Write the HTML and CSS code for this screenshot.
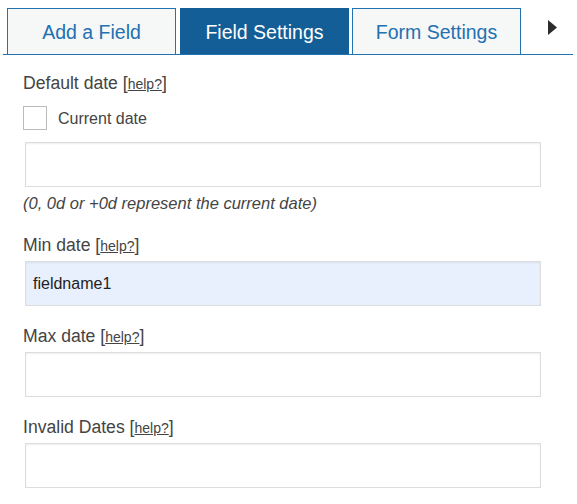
FILE: index.html
```html
<!DOCTYPE html>
<html>
<head>
<meta charset="utf-8">
<link rel="stylesheet" href="styles.css">
</head>
<body>
<div class="tabs">
  <div class="tab">Add a Field</div>
  <div class="tab active">Field Settings</div>
  <div class="tab third">Form Settings</div>
  <div class="more"><svg width="10" height="15" viewBox="0 0 10 15"><polygon points="0,0 9,7.5 0,15" fill="#2c2c2c"/></svg></div>
</div>
<div class="content">
  <div class="label">Default date [<a class="help">help?</a>]</div>
  <div class="check-row"><span class="checkbox"></span><span class="check-label">Current date</span></div>
  <div class="input first"></div>
  <div class="hint">(0, 0d or +0d represent the current date)</div>

  <div class="label gap-first">Min date [<a class="help">help?</a>]</div>
  <div class="input filled">fieldname1</div>

  <div class="label gap">Max date [<a class="help">help?</a>]</div>
  <div class="input"></div>

  <div class="label gap">Invalid Dates [<a class="help">help?</a>]</div>
  <div class="input"></div>
</div>
</body>
</html>
```
FILE: styles.css
```css
html, body {
  margin: 0;
  padding: 0;
  background: #fff;
  font-family: "Liberation Sans", Arial, sans-serif;
}
.tabs {
  display: flex;
  align-items: flex-end;
  margin: 8px 4px 0 3px;
  padding-left: 4px;
  border-bottom: 1px solid #2271b1;
  height: 46px;
}
.tab {
  box-sizing: border-box;
  width: 169px;
  height: 46px;
  border: 1px solid #2271b1;
  border-bottom: none;
  background: #f6f7f7;
  color: #2271b1;
  font-size: 19.5px;
  display: flex;
  align-items: center;
  justify-content: center;
  padding-top: 2px;
  margin-right: 4px;
}
.tab.active {
  background: #135e96;
  border-color: #135e96;
  color: #fff;
  margin-right: 3px;
}
.more {
  flex: 1;
  align-self: stretch;
  display: flex;
  align-items: center;
  justify-content: center;
  padding-bottom: 8px;
  padding-left: 8px;
}
.more svg { display: block; }
.content {
  padding: 16px 0 0 23px;
  color: #444;
}
.label {
  font-size: 17.6px;
  line-height: 24px;
}
.label.gap-first {
  margin-top: 20px;
}
.label.gap {
  margin-top: 18px;
}
.help {
  font-size: 14px;
  line-height: 1;
  text-decoration: underline;
  color: #444;
}
.check-row {
  display: flex;
  align-items: center;
  margin-top: 11px;
  height: 24px;
}
.checkbox {
  box-sizing: border-box;
  width: 24px;
  height: 24px;
  border: 1px solid #bbbbbb;
  background: #fff;
}
.check-label {
  font-size: 16px;
  margin-left: 11px;
  padding-top: 2px;
  color: #444;
}
.input {
  box-sizing: border-box;
  margin: 4px 0 0 2px;
  width: 516px;
  height: 45px;
  border: 1px solid #dddddd;
  box-shadow: inset 0 1px 2px rgba(0,0,0,0.07);
  background: #fff;
  font-size: 16px;
  color: #222;
  display: flex;
  align-items: center;
  padding-left: 7px;
}
.input.first {
  margin-top: 12px;
}
.input.filled {
  background: #e8f0fe;
}
.hint {
  font-size: 16.5px;
  font-style: italic;
  line-height: 20px;
  margin-top: 6px;
  color: #444;
}
```
